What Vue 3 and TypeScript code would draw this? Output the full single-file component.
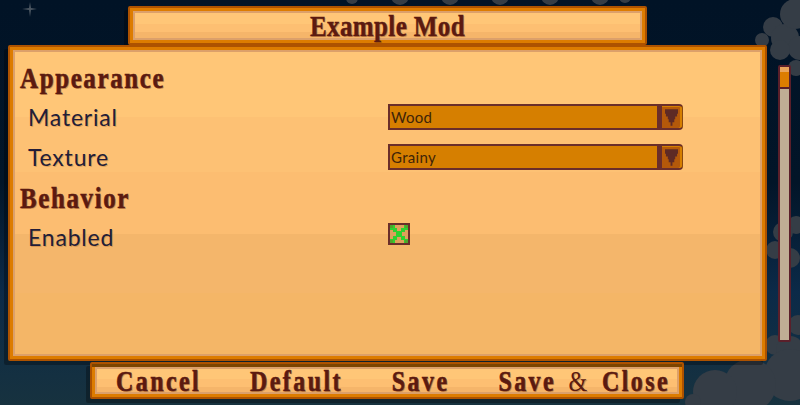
<script setup lang="ts">
interface Row {
  kind: 'heading' | 'select' | 'check'
  label: string
  value?: string
}
const rows: Row[] = [
  { kind: 'heading', label: 'Appearance' },
  { kind: 'select', label: 'Material', value: 'Wood' },
  { kind: 'select', label: 'Texture', value: 'Grainy' },
  { kind: 'heading', label: 'Behavior' },
  { kind: 'check', label: 'Enabled' },
]
const clouds: [number, number, number][] = [
  [352, -2, 6], [400, -4, 9], [450, -4, 9], [500, -4, 9], [550, -4, 9], [600, -4, 9], [625, -3, 6],
  [773, 27, 10], [762, 40, 7], [785, 38, 14], [795, 14, 15], [800, 48, 12], [796, 68, 8], [780, 50, 10],
  [796, 225, 9], [783, 232, 10], [775, 250, 9], [790, 258, 10],
  [798, 325, 10], [775, 345, 10], [790, 350, 14], [790, 375, 26], [750, 385, 26], [715, 392, 22], [693, 402, 8],
]
</script>

<template>
  <div class="stage">
    <svg class="sky" width="800" height="405" viewBox="0 0 800 405" aria-hidden="true">
      <circle v-for="(c, i) in clouds" :key="i" :cx="c[0]" :cy="c[1]" :r="c[2]" fill="#353d46" />
      <path d="M30 2 L31 8 L37 9 L31 10 L30 17 L29 10 L22 9 L29 8 Z" fill="#4a5560" />
    </svg>

    <header class="panel title-panel">
      <h1 class="title">Example Mod</h1>
    </header>

    <div class="middle">
      <main class="panel main-panel">
        <div v-for="row in rows" :key="row.label" class="row">
          <h2 v-if="row.kind === 'heading'" class="heading">{{ row.label }}</h2>
          <template v-else>
            <span class="label">{{ row.label }}</span>
            <div v-if="row.kind === 'select'" class="select">
              <div class="field">{{ row.value }}</div>
              <div class="drop">
                <svg width="13" height="17" viewBox="0 0 14 18" aria-hidden="true">
                  <path d="M0 0H14V5H13V8H11V11H10V14H8V18H6V14H4V11H3V8H1V5H0Z" fill="#5e2a25" />
                </svg>
              </div>
            </div>
            <div v-else class="check">
              <svg width="18" height="18" viewBox="0 0 6 6" shape-rendering="crispEdges" aria-hidden="true">
                <rect width="6" height="6" fill="#dfa05a" />
                <path d="M0 0H1.5V1H2.2V2H3.8V1H4.5V0H6V1.5H5V2.2H4V3.8H5V4.5H6V6H4.5V5H3.8V4H2.2V5H1.5V6H0V4.5H1V3.8H2V2.2H1V1.5H0Z" fill="#2fd02f" />
                <path d="M0 0H1V1H0ZM5 0H6V1H5ZM0 5H1V6H0ZM5 5H6V6H5Z" fill="#4fa52a" />
              </svg>
            </div>
          </template>
        </div>
      </main>
      <div class="scrollbar"><div class="thumb"></div></div>
    </div>

    <footer class="panel bottom-panel">
      <button class="action">Cancel</button>
      <button class="action">Default</button>
      <button class="action">Save</button>
      <button class="action wide">Save <span class="amp">&amp;</span> Close</button>
    </footer>
  </div>
</template>

<style>
html, body { margin: 0; padding: 0; }
</style>

<style scoped>
.stage {
  position: relative;
  width: 800px;
  height: 405px;
  overflow: hidden;
  padding-top: 6px;
  box-sizing: border-box;
  background: linear-gradient(180deg, #011326 0%, #021528 45%, #0b2a48 72%, #17323f 100%);
  display: flex;
  flex-direction: column;
}
.sky { position: absolute; left: 0; top: 0; }
.panel {
  position: relative;
  box-sizing: border-box;
  border: 2px solid #ad5200;
  border-radius: 2px;
  box-shadow:
    inset 0 0 0 3px #dd7c00,
    inset 0 0 0 5px #dca06a,
    -4px 4px 0 rgba(0, 0, 0, 0.3);
}
.title-panel {
  width: 519px;
  height: 39px;
  margin-left: 128px;
  background: linear-gradient(180deg, #ffc677 0 45%, #fdbf72 45% 70%, #f5b56a 70% 100%);
  display: flex;
  align-items: center;
  justify-content: center;
}
.title {
  margin: 0;
  font: 700 25px/1 "Liberation Serif", serif;
  letter-spacing: 0.4px;
  color: #5b1a10;
  -webkit-text-stroke: 0.4px #5b1a10;
  text-shadow: 1px 1px 0 rgba(130, 60, 10, 0.35);
  transform: scaleY(1.2);
}
.middle {
  position: relative;
  display: flex;
  align-items: flex-start;
  gap: 11px;
  margin-left: 8px;
}
.main-panel {
  width: 759px;
  height: 316px;
  padding: 11px 0 0 10px;
  background: linear-gradient(
    180deg,
    #ffc677 0 70px,
    #fdc174 70px 125px,
    #fcbd71 125px 187px,
    #f4b66b 187px 246px,
    #f4b667 246px 100%
  );
}
.row {
  display: flex;
  align-items: center;
  height: 40px;
}
.heading {
  margin: 0;
  font: 700 25px/1 "Liberation Serif", serif;
  letter-spacing: 1.6px;
  color: #5b1a10;
  -webkit-text-stroke: 0.5px #5b1a10;
  text-shadow: 1px 1px 0 rgba(130, 60, 10, 0.35);
  transform: scaleY(1.15);
}
.label {
  width: 368px;
  padding-left: 8px;
  padding-bottom: 2px;
  box-sizing: border-box;
  font: 400 23px/1 "Lato", sans-serif;
  letter-spacing: 0.8px;
  color: #221d38;
  text-shadow: 1px 1px 0 rgba(130, 60, 10, 0.25);
}
.select {
  display: flex;
  height: 26px;
  width: 295px;
  margin-top: -2px;
}
.field {
  width: 271px;
  box-sizing: border-box;
  border: 2px solid #6a2e2a;
  background: #d67f00;
  padding-left: 1px;
  font: 400 15px/22px "Lato", sans-serif;
  letter-spacing: 0.3px;
  color: #3f2408;
}
.drop {
  width: 24px;
  box-sizing: border-box;
  border: 2px solid #6a2e2a;
  border-left-width: 3px;
  border-right: 1px solid #8a4a10;
  border-radius: 0 4px 4px 0;
  background: #b4590a;
  box-shadow: inset -2px 0 0 #d67f00, inset 0 1px 0 #d67f00;
  display: flex;
  justify-content: center;
  padding: 3px 2px 0 0;
}
.check {
  width: 22px;
  height: 22px;
  box-sizing: border-box;
  border: 2px solid #6a2e2a;
  margin-top: -8px;
  background: #dfa05a;
}
.check svg { display: block; }
.scrollbar {
  width: 13px;
  height: 277px;
  margin-top: 20px;
  box-sizing: border-box;
  border: 2px solid #5a1f2a;
  border-radius: 2px;
  background: #bfae94;
}
.thumb {
  height: 20px;
  background: linear-gradient(180deg, #e9a45a 0 25%, #dc7d00 25% 100%);
  border-bottom: 2px solid #5a1f2a;
}
.bottom-panel {
  width: 594px;
  height: 37px;
  margin-top: 1px;
  margin-left: 90px;
  padding-left: 24px;
  display: flex;
  align-items: center;
  gap: 49px;
  background: linear-gradient(180deg, #ffc677 0 45%, #fdbf72 45% 70%, #f5b56a 70% 100%);
  box-shadow:
    inset 0 3px 0 0 #7c4400,
    inset 0 0 0 3px #dd7c00,
    inset 0 0 0 5px #dca06a,
    -4px 4px 0 rgba(0, 0, 0, 0.3);
}
.action {
  padding: 0;
  border: 0;
  background: none;
  font: 700 24px/1 "Liberation Serif", serif;
  letter-spacing: 2.4px;
  color: #5b1a10;
  -webkit-text-stroke: 0.5px #5b1a10;
  text-shadow: 1px 1px 0 rgba(130, 60, 10, 0.35);
  transform: scaleY(1.2);
}
.wide { word-spacing: 4px; }
.amp { font-weight: 400; -webkit-text-stroke: 0; }
</style>
